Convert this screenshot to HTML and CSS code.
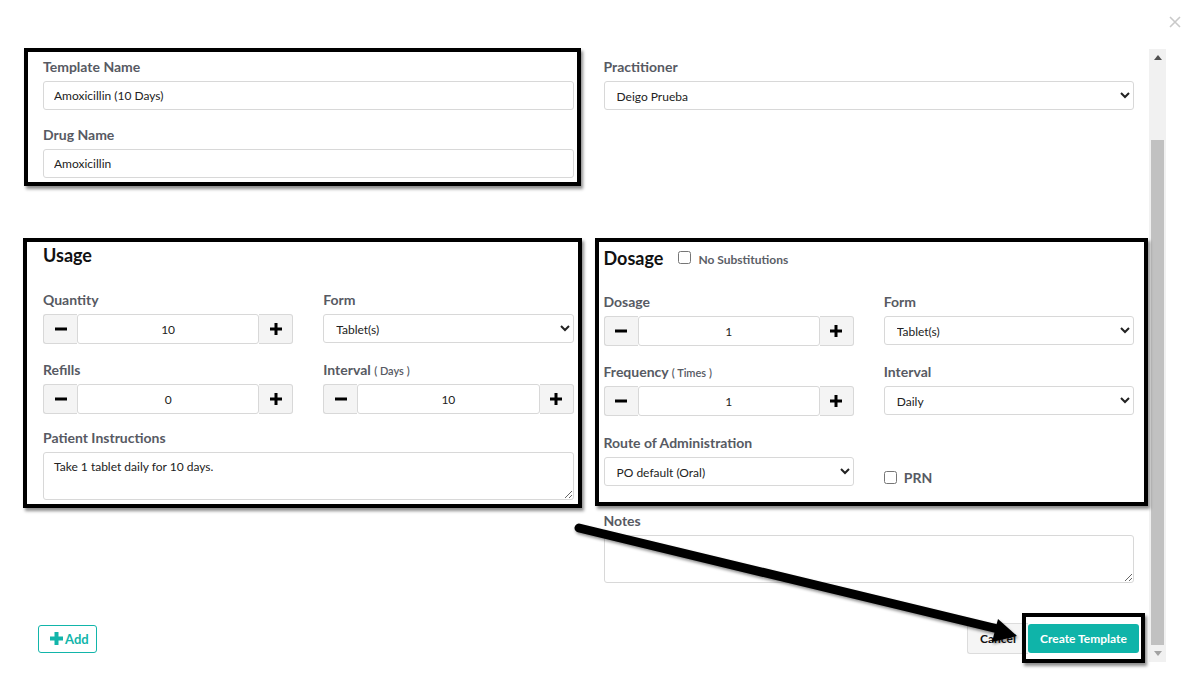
FILE: index.html
```html
<!DOCTYPE html>
<html lang="en">
  <head>
    <meta charset="UTF-8" />
    <meta name="viewport" content="width=device-width, initial-scale=1.0" />
    <title>Create Template</title>
    <link rel="stylesheet" href="styles.css">
  </head>
  <body>
    <div class="modal">
      <!-- top bar (close) -->
      <div class="modal-top">
        <span class="close">
          <svg width="12" height="12" viewBox="0 0 12 12"><path d="M1 1L11 11M11 1L1 11" stroke="#c9c9c9" stroke-width="1.6"/></svg>
        </span>
      </div>

      <div class="modal-body">
        <div class="scroll-pane">
          <!-- row 1 -->
          <div class="form-row">
            <div class="col">
              <div class="group">
                <label class="lbl">Template Name</label>
                <input class="field" type="text" value="Amoxicillin (10 Days)">
              </div>
              <div class="group last">
                <label class="lbl">Drug Name</label>
                <input class="field" type="text" value="Amoxicillin">
              </div>
            </div>
            <div class="col">
              <div class="group last">
                <label class="lbl">Practitioner</label>
                <select class="field"><option>Deigo Prueba</option></select>
              </div>
            </div>
          </div>

          <!-- row 2 -->
          <div class="form-row mid-row">
            <div class="col">
              <h4 class="section-title">Usage</h4>
              <div class="sub-row">
                <div class="group spin-group">
                  <label class="lbl">Quantity</label>
                  <div class="spin">
                    <button class="spin-btn minus"><svg width="14" height="14" viewBox="0 0 14 14"><rect x="1" y="5.5" width="12" height="3" fill="#000"/></svg></button>
                    <input class="spin-input" type="text" value="10">
                    <button class="spin-btn plus"><svg width="14" height="14" viewBox="0 0 14 14"><rect x="1" y="5.5" width="12" height="3" fill="#000"/><rect x="5.5" y="1" width="3" height="12" fill="#000"/></svg></button>
                  </div>
                </div>
                <div class="group spin-group">
                  <label class="lbl">Form</label>
                  <select class="field"><option>Tablet(s)</option></select>
                </div>
              </div>
              <div class="sub-row">
                <div class="group spin-group refill">
                  <label class="lbl">Refills</label>
                  <div class="spin">
                    <button class="spin-btn minus"><svg width="14" height="14" viewBox="0 0 14 14"><rect x="1" y="5.5" width="12" height="3" fill="#000"/></svg></button>
                    <input class="spin-input" type="text" value="0">
                    <button class="spin-btn plus"><svg width="14" height="14" viewBox="0 0 14 14"><rect x="1" y="5.5" width="12" height="3" fill="#000"/><rect x="5.5" y="1" width="3" height="12" fill="#000"/></svg></button>
                  </div>
                </div>
                <div class="group spin-group refill">
                  <label class="lbl">Interval <small>( Days )</small></label>
                  <div class="spin">
                    <button class="spin-btn minus"><svg width="14" height="14" viewBox="0 0 14 14"><rect x="1" y="5.5" width="12" height="3" fill="#000"/></svg></button>
                    <input class="spin-input" type="text" value="10">
                    <button class="spin-btn plus"><svg width="14" height="14" viewBox="0 0 14 14"><rect x="1" y="5.5" width="12" height="3" fill="#000"/><rect x="5.5" y="1" width="3" height="12" fill="#000"/></svg></button>
                  </div>
                </div>
              </div>
              <div class="group last">
                <label class="lbl">Patient Instructions</label>
                <textarea class="field area">Take 1 tablet daily for 10 days.</textarea>
              </div>
            </div>

            <div class="col">
              <div class="dosage-head">
                <h4 class="section-title">Dosage</h4>
                <input class="check" type="checkbox">
                <span class="check-text">No Substitutions</span>
              </div>
              <div class="sub-row">
                <div class="group spin-group">
                  <label class="lbl">Dosage</label>
                  <div class="spin">
                    <button class="spin-btn minus"><svg width="14" height="14" viewBox="0 0 14 14"><rect x="1" y="5.5" width="12" height="3" fill="#000"/></svg></button>
                    <input class="spin-input" type="text" value="1">
                    <button class="spin-btn plus"><svg width="14" height="14" viewBox="0 0 14 14"><rect x="1" y="5.5" width="12" height="3" fill="#000"/><rect x="5.5" y="1" width="3" height="12" fill="#000"/></svg></button>
                  </div>
                </div>
                <div class="group spin-group">
                  <label class="lbl">Form</label>
                  <select class="field"><option>Tablet(s)</option></select>
                </div>
              </div>
              <div class="sub-row">
                <div class="group spin-group freq">
                  <label class="lbl">Frequency <small>( Times )</small></label>
                  <div class="spin">
                    <button class="spin-btn minus"><svg width="14" height="14" viewBox="0 0 14 14"><rect x="1" y="5.5" width="12" height="3" fill="#000"/></svg></button>
                    <input class="spin-input" type="text" value="1">
                    <button class="spin-btn plus"><svg width="14" height="14" viewBox="0 0 14 14"><rect x="1" y="5.5" width="12" height="3" fill="#000"/><rect x="5.5" y="1" width="3" height="12" fill="#000"/></svg></button>
                  </div>
                </div>
                <div class="group spin-group freq">
                  <label class="lbl">Interval</label>
                  <select class="field"><option>Daily</option></select>
                </div>
              </div>
              <div class="sub-row">
                <div class="group last">
                  <label class="lbl">Route of Administration</label>
                  <select class="field"><option>PO default (Oral)</option></select>
                </div>
                <div class="prn">
                  <input class="check" type="checkbox">
                  <span class="prn-text">PRN</span>
                </div>
              </div>
            </div>
          </div>

          <!-- row 3 -->
          <div class="form-row notes-row">
            <div class="col"></div>
            <div class="col">
              <div class="group last">
                <label class="lbl">Notes</label>
                <textarea class="field area"></textarea>
              </div>
            </div>
          </div>

          <!-- footer -->
          <div class="footer">
            <button class="btn-add">
              <svg width="13" height="13" viewBox="0 0 13 13"><rect x="0" y="4.5" width="13" height="4" fill="#12b5aa"/><rect x="4.5" y="0" width="4" height="13" fill="#12b5aa"/></svg>
              Add
            </button>
            <div class="footer-right">
              <button class="btn-cancel">Cancel</button>
              <button class="btn-create">Create Template</button>
            </div>
          </div>
        </div>

        <!-- scrollbar -->
        <div class="scrollbar">
          <div class="sb-arrow"><svg width="8" height="5" viewBox="0 0 8 5"><path d="M0 5L4 0L8 5Z" fill="#505050"/></svg></div>
          <div class="sb-track"><div class="sb-thumb"></div></div>
          <div class="sb-arrow"><svg width="8" height="5" viewBox="0 0 8 5"><path d="M0 0L4 5L8 0Z" fill="#a3a3a3"/></svg></div>
        </div>
      </div>

      <!-- screenshot annotations -->
      <div class="mark mark-1"></div>
      <div class="mark mark-2"></div>
      <div class="mark mark-3"></div>
      <div class="mark mark-4"></div>
      <svg class="arrow" width="1192" height="692" viewBox="0 0 1192 692">
        <defs>
          <filter id="sh" x="-10%" y="-10%" width="120%" height="120%">
            <feDropShadow dx="1" dy="2" stdDeviation="1.5" flood-color="#000" flood-opacity="0.45"/>
          </filter>
        </defs>
        <g filter="url(#sh)">
          <line x1="579" y1="528" x2="998" y2="629" stroke="#000" stroke-width="9" stroke-linecap="round"/>
          <polygon points="1017,636 992,642 998,619" fill="#000"/>
        </g>
      </svg>
    </div>
  </body>
</html>
```

FILE: styles.css
```css
*,
*::before,
*::after {
  margin: 0;
  padding: 0;
  box-sizing: border-box;
}

body {
  background: #fff;
  font-family: Lato, "Liberation Sans", sans-serif;
  color: #222;
}

/* ------------------------------ modal ------------------------------ */
.modal {
  position: relative;
  width: 1192px;
  height: 692px;
  overflow: hidden;
}

.modal-top {
  height: 49px;
  display: flex;
  justify-content: flex-end;
  padding: 12px 11px 0 0;
}

.close {
  display: block;
  width: 12px;
  height: 12px;
}

.modal-body {
  display: flex;
  height: 613px;
}

.scroll-pane {
  width: 1136px;
  margin-left: 13px;
  padding: 8px 15px 0 30px;
}

/* ------------------------------ rows ------------------------------ */
.form-row {
  display: grid;
  grid-template-columns: 1fr 1fr;
  gap: 30px;
}

.mid-row {
  margin-top: 65px;
}

.notes-row {
  margin-top: 11px;
}

.sub-row {
  display: grid;
  grid-template-columns: 1fr 1fr;
  gap: 30px;
}

/* ------------------------------ fields ------------------------------ */
.group {
  margin-bottom: 15px;
}

.group.last {
  margin-bottom: 0;
}

.spin-group {
  margin-bottom: 16px;
}

.refill {
  margin-bottom: 14px;
}

.freq {
  margin-bottom: 17px;
}

.lbl {
  display: block;
  height: 20px;
  line-height: 20px;
  margin-bottom: 4px;
  font-size: 14px;
  font-weight: 700;
  color: #575a63;
}

.lbl small {
  font-size: 11px;
  font-weight: 600;
}

.field {
  display: block;
  width: 100%;
  height: 29px;
  padding: 0 10px;
  border: 1px solid #d8d8d8;
  border-radius: 3px;
  background: #fff;
  font-family: Lato, "Liberation Sans", sans-serif;
  font-size: 12px;
  color: #222;
  outline: none;
}

select.field {
  padding: 1px 8px 0;
}

.area {
  height: 48px;
  padding: 6px 10px;
  resize: vertical;
}

.section-title {
  height: 24px;
  line-height: 24px;
  margin-bottom: 23px;
  font-size: 18px;
  font-weight: 700;
  color: #111;
}

.dosage-head {
  display: flex;
  align-items: center;
  height: 26px;
  margin-bottom: 23px;
  padding-top: 3px;
}

.dosage-head .section-title {
  margin: 0 15px 0 0;
  font-size: 18px;
}

.check {
  width: 13px;
  height: 13px;
  margin: 0;
}

.check-text {
  margin-left: 7px;
  margin-top: 3px;
  font-size: 12px;
  font-weight: 700;
  color: #5b5e66;
}

.prn {
  display: flex;
  align-items: center;
  align-self: end;
  height: 29px;
  padding-top: 12px;
}

.prn-text {
  margin-left: 7px;
  font-size: 14px;
  font-weight: 700;
  color: #575a63;
}

/* ------------------------------ spinner ------------------------------ */
.spin {
  display: flex;
  height: 30px;
}

.spin-btn {
  width: 34px;
  flex: none;
  display: flex;
  align-items: center;
  justify-content: center;
  background: #f4f4f4;
  border: 1px solid #d8d8d8;
}

.minus {
  border-radius: 3px 0 0 3px;
  border-right: none;
}

.plus {
  border-radius: 0 3px 3px 0;
  border-left: none;
}

.spin-input {
  flex: 1;
  min-width: 0;
  border: 1px solid #d8d8d8;
  border-radius: 3px;
  text-align: center;
  font-family: Lato, "Liberation Sans", sans-serif;
  font-size: 12px;
  color: #222;
  outline: none;
}

/* ------------------------------ footer ------------------------------ */
.footer {
  display: flex;
  justify-content: space-between;
  align-items: center;
  margin: 40px -5px 0 -5px;
}

.btn-add {
  display: flex;
  align-items: center;
  gap: 2px;
  width: 59px;
  height: 28px;
  padding-left: 11px;
  border: 1px solid #12b5aa;
  border-radius: 3px;
  background: #fff;
  font-family: Lato, "Liberation Sans", sans-serif;
  font-size: 13px;
  font-weight: 700;
  color: #12b5aa;
}

.footer-right {
  display: flex;
  align-items: center;
}

.btn-cancel {
  width: 61px;
  height: 31px;
  border: 1px solid #dcdcdc;
  border-right: none;
  border-radius: 3px 0 0 3px;
  background: #f5f5f5;
  font-family: Lato, "Liberation Sans", sans-serif;
  font-size: 12px;
  font-weight: 700;
  color: #111;
}

.btn-create {
  width: 111px;
  height: 29px;
  border: none;
  border-radius: 3px;
  background: #0fb4a9;
  font-family: Lato, "Liberation Sans", sans-serif;
  font-size: 12px;
  font-weight: 700;
  color: #fff;
}

/* ------------------------------ scrollbar ------------------------------ */
.scrollbar {
  width: 17px;
  height: 613px;
  background: #f1f1f1;
  display: flex;
  flex-direction: column;
}

.sb-arrow {
  height: 17px;
  display: flex;
  align-items: center;
  justify-content: center;
}

.sb-track {
  flex: 1;
  display: flex;
  flex-direction: column;
  justify-content: flex-end;
  padding: 0 2px;
}

.sb-thumb {
  height: 505px;
  background: #c1c1c1;
}

/* ------------------------------ annotations ------------------------------ */
.mark {
  position: absolute;
  border: 4px solid #000;
  box-shadow: 2px 3px 3px rgba(0, 0, 0, 0.45);
  pointer-events: none;
}

.mark-1 {
  left: 24px;
  top: 48px;
  width: 557px;
  height: 138px;
}

.mark-2 {
  left: 23px;
  top: 238px;
  width: 559px;
  height: 270px;
}

.mark-3 {
  left: 595px;
  top: 238px;
  width: 553px;
  height: 268px;
}

.mark-4 {
  left: 1022px;
  top: 613px;
  width: 123px;
  height: 50px;
}

.arrow {
  position: absolute;
  left: 0;
  top: 0;
  pointer-events: none;
}
```
